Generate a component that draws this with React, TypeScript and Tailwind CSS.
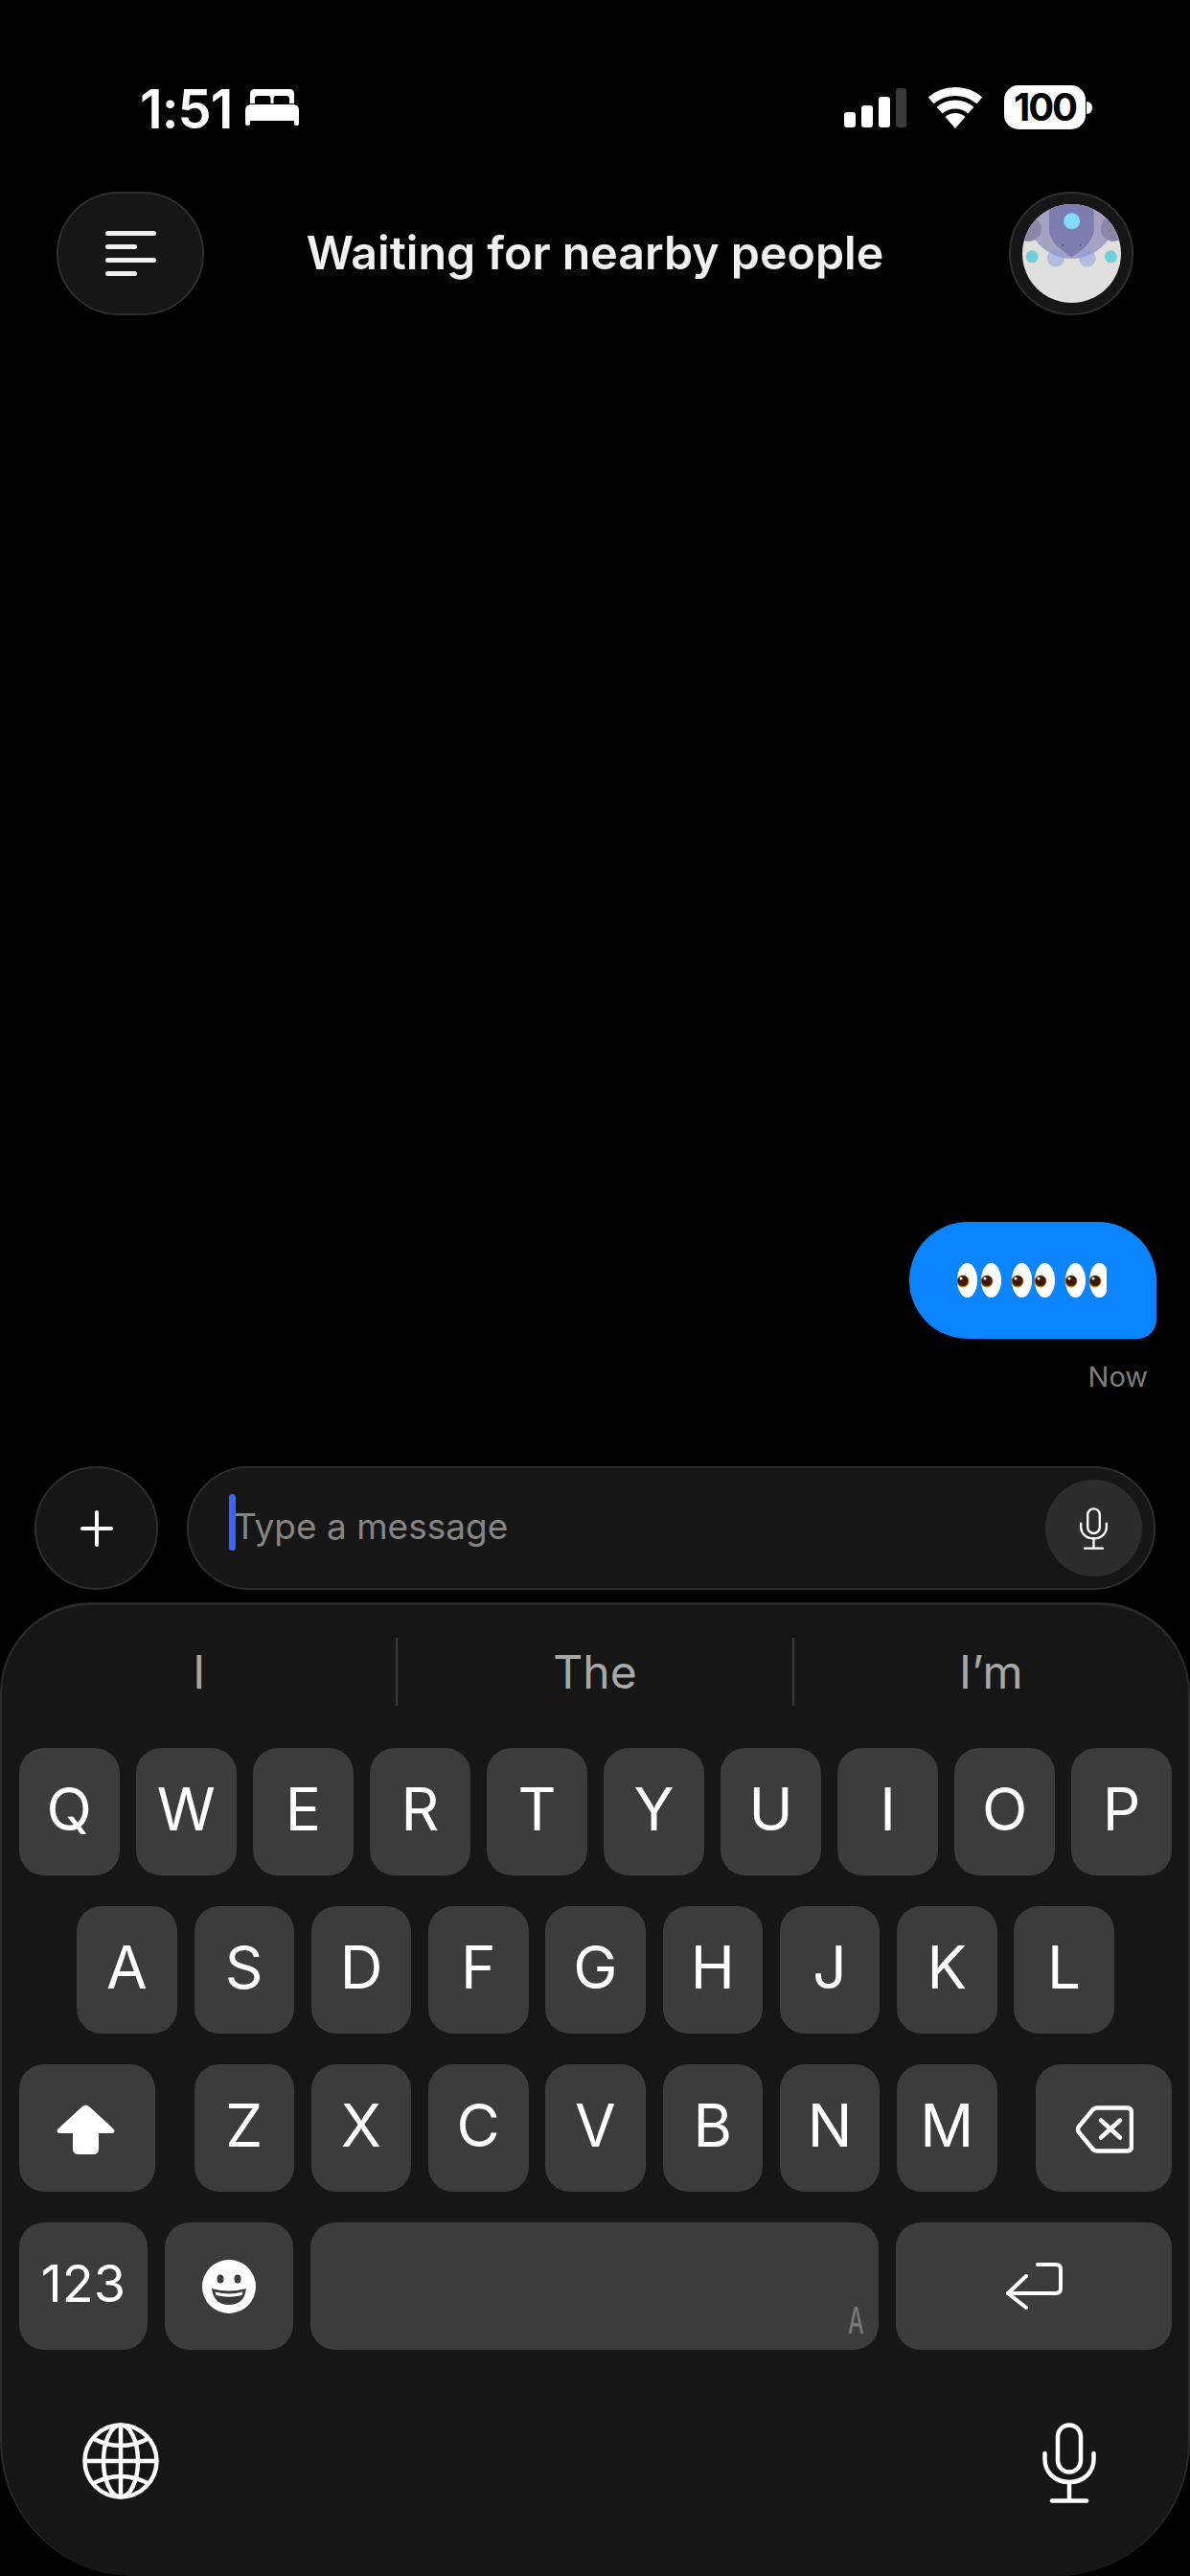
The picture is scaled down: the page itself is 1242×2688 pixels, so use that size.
const rowOne = ['Q', 'W', 'E', 'R', 'T', 'Y', 'U', 'I', 'O', 'P'];
const rowTwo = ['A', 'S', 'D', 'F', 'G', 'H', 'J', 'K', 'L'];
const rowThree = ['Z', 'X', 'C', 'V', 'B', 'N', 'M'];
const eyeCenters = [9, 34, 66, 90, 122, 147];

function Key({ label }: { label: string }) {
  return (
    <div className="w-[104.5px] h-[133px] rounded-[26px] bg-[#3c3c3c] flex items-center justify-center pb-[6px] text-[62px] leading-none text-white">
      {label}
    </div>
  );
}

function BedIcon() {
  return (
    <svg width="56" height="38" viewBox="0 0 56 38" fill="#fff">
      <path
        fillRule="evenodd"
        d="M5 15V5Q5 0 10 0H46Q51 0 51 5V15H46V10Q46 7 43 7H32Q29.500 7 29.500 10V15H26.500V10Q26.500 7 24 7H13Q10 7 10 10V15Z"
      />
      <path d="M0 22Q0 16 6 16H50Q56 16 56 22V36Q56 38 54 38H53Q51 38 51 36V33H5V36Q5 38 3 38H2Q0 38 0 36Z" />
    </svg>
  );
}

function SignalIcon() {
  return (
    <div className="flex items-end gap-[6px] h-[41px]">
      <div className="w-[12px] h-[16px] rounded-[3px] bg-white" />
      <div className="w-[12px] h-[23px] rounded-[3px] bg-white" />
      <div className="w-[12px] h-[32px] rounded-[3px] bg-white" />
      <div className="w-[11px] h-[41px] rounded-[3px] bg-[#3a3a3a]" />
    </div>
  );
}

function WifiIcon() {
  return (
    <svg width="56" height="43" viewBox="0 0 56 43" fill="none" stroke="#fff" strokeWidth="9">
      <path d="M2.740 13.940A38.500 38.500 0 0 1 53.260 13.940" />
      <path d="M11.600 24.130A25 25 0 0 1 44.400 24.130" />
      <path d="M17.500 30.920A16 16 0 0 1 38.500 30.920L28 43Z" fill="#fff" stroke="none" />
    </svg>
  );
}

function Battery() {
  return (
    <div className="flex items-center gap-[1px]">
      <div className="w-[85px] h-[46px] rounded-[15px] bg-white flex items-center justify-center text-[40px] font-bold leading-none text-black tracking-[-2px]">
        100
      </div>
      <div className="w-[6px] h-[13px] rounded-r-[6px] bg-white" />
    </div>
  );
}

function Avatar() {
  return (
    <div className="w-[130px] h-[129px] rounded-full bg-[#161616] border-[2px] border-[#2e2e2e] flex items-center justify-center">
      <svg width="103" height="103" viewBox="0 0 103.300 103.300">
        <defs>
          <clipPath id="avatar-clip">
            <circle cx="51.650" cy="51.650" r="51.650" />
          </clipPath>
        </defs>
        <g clipPath="url(#avatar-clip)">
          <rect width="104" height="104" fill="#e0e0de" />
          <ellipse cx="51.700" cy="2" rx="50" ry="55" fill="#a3a3c3" />
          <path d="M28 0V25C28 42 45 50 51.700 56C58 50 75 42 75 25V0Z" fill="#7d7db0" />
          <circle cx="7" cy="26" r="13" fill="#8d86a8" />
          <circle cx="95" cy="26" r="13" fill="#8d86a8" />
          <circle cx="35" cy="56.700" r="9" fill="#8f9ce0" opacity="0.55" />
          <circle cx="68" cy="56.700" r="9" fill="#8f9ce0" opacity="0.55" />
          <circle cx="51.700" cy="17.700" r="8.500" fill="#7fdcff" />
          <circle cx="10.300" cy="55" r="6.500" fill="#6fd0d8" />
          <circle cx="92.700" cy="55" r="6.500" fill="#6fd0d8" />
          <circle cx="42" cy="43" r="0.700" fill="#333" />
          <circle cx="61" cy="43" r="0.700" fill="#333" />
          <circle cx="12" cy="27" r="0.600" fill="#a33" />
          <circle cx="91" cy="27" r="0.600" fill="#a33" />
        </g>
      </svg>
    </div>
  );
}

function EyesEmoji() {
  return (
    <svg width="156" height="36" viewBox="0 0 156 36">
      {eyeCenters.map((cx) => (
        <g key={cx}>
          <ellipse cx={cx + 1.500} cy="18" rx="10.500" ry="18" fill="#fff" />
          <circle cx={cx - 3} cy="19" r="6.500" fill="#b98508" />
          <circle cx={cx - 3} cy="18.500" r="5.500" fill="#3a1a05" />
          <circle cx={cx - 5} cy="16" r="1.500" fill="#fff" />
        </g>
      ))}
    </svg>
  );
}

function SmallMic({ width, height, stroke }: { width: number; height: number; stroke: number }) {
  return (
    <svg width={width} height={height} viewBox="0 0 56 84" fill="none" stroke="#fff" strokeWidth={stroke} strokeLinecap="round">
      <rect x="16" y="2.500" width="24" height="49" rx="12" />
      <path d="M2.500 32V38C2.500 52 13 62 28 62C43 62 53.500 52 53.500 38V32" />
      <path d="M28 62V81.500M10 81.500H46" />
    </svg>
  );
}

function ShiftIcon() {
  return (
    <svg width="61" height="52" viewBox="0 0 61 52" fill="#fff">
      <path d="M27 2Q30.500 -1 34 2L59 25Q62.500 29 58 30H44V46Q44 52 38 52H23Q17 52 17 46V30H3Q-1.500 29 2 25Z" />
    </svg>
  );
}

function DeleteIcon() {
  return (
    <svg width="60" height="50" viewBox="0 0 60 50" fill="none" stroke="#fff" strokeWidth="4.500" strokeLinecap="round" strokeLinejoin="round">
      <path d="M22 2.500H53Q58 2.500 58 7.500V42.500Q58 47.500 53 47.500H22Q20 47.500 18 46L3 28Q1 25 3 22L18 4Q20 2.500 22 2.500Z" />
      <path d="M26 15.500L46 33.500M46 15.500L26 33.500" />
    </svg>
  );
}

function ReturnIcon() {
  return (
    <svg width="59" height="49" viewBox="0 0 59 49" fill="none" stroke="#fff" strokeWidth="4" strokeLinecap="round" strokeLinejoin="round">
      <path d="M33 2H52Q57 2 57 7V27Q57 32 52 32H2" />
      <path d="M21 14L2 32L21 47" />
    </svg>
  );
}

function EmojiIcon() {
  return (
    <svg width="56" height="56" viewBox="0 0 56 56">
      <circle cx="28" cy="28" r="28" fill="#fff" />
      <ellipse cx="19" cy="20" rx="3.500" ry="4.500" fill="#3c3c3c" />
      <ellipse cx="37" cy="20" rx="3.500" ry="4.500" fill="#3c3c3c" />
      <path d="M10 30Q28 35 46 30Q44 47 28 47Q12 47 10 30Z" fill="#3c3c3c" />
      <path d="M13.500 33.500Q28 37.500 42.500 33.500L41.500 37Q28 40.500 14.500 37Z" fill="#fff" />
    </svg>
  );
}

function GlobeIcon() {
  return (
    <svg width="80" height="80" viewBox="0 0 80 80" fill="none" stroke="#fff" strokeWidth="4.500">
      <circle cx="40" cy="40" r="37.500" />
      <ellipse cx="40" cy="40" rx="18" ry="37.500" />
      <path d="M40 2.500V77.500M2.500 40H77.500" />
      <path d="M10 16Q40 32 70 16M10 64Q40 48 70 64" />
    </svg>
  );
}

export default function App() {
  return (
    <div className="relative w-[1242px] h-[2688px] bg-black flex flex-col font-['Inter',sans-serif] overflow-hidden">
      {/* Status bar */}
      <div className="h-[200px] pt-[89px] pl-[146px] pr-[102px] flex items-start justify-between">
        <div className="flex items-center gap-[14px] h-[46px]">
          <span className="pt-[3px] text-[56px] leading-none font-semibold text-white tracking-[-1px]">1:51</span>
          <BedIcon />
        </div>
        <div className="flex items-center h-[46px]">
          <SignalIcon />
          <div className="mx-[23px]">
            <WifiIcon />
          </div>
          <Battery />
        </div>
      </div>

      {/* Header */}
      <div className="h-[129px] pl-[59px] pr-[59px] flex items-center">
        <div className="w-[154px] h-[129px] shrink-0 rounded-full bg-[#161616] border-[2px] border-[#2e2e2e] flex flex-col justify-center gap-[9px] pl-[49px]">
          <div className="w-[53px] h-[5px] rounded-full bg-[#f0f0f0]" />
          <div className="w-[33px] h-[5px] rounded-full bg-[#f0f0f0]" />
          <div className="w-[53px] h-[5px] rounded-full bg-[#f0f0f0]" />
          <div className="w-[33px] h-[5px] rounded-full bg-[#f0f0f0]" />
        </div>
        <div className="flex-1 text-center text-[48.3px] font-semibold leading-none text-[#f0f0f2]">Waiting for nearby people</div>
        <div className="w-[154px] shrink-0 flex justify-end">
          <Avatar />
        </div>
      </div>

      {/* Chat */}
      <div className="flex-1 flex flex-col items-end justify-end pb-[78px]">
        <div className="w-[258px] h-[122px] mr-[35px] bg-[#0a84ff] rounded-tl-[61px] rounded-tr-[61px] rounded-bl-[61px] rounded-br-[20px] flex items-center justify-center pr-[2px]">
          <EyesEmoji />
        </div>
        <div className="mt-[25px] mr-[44px] text-[29px] leading-[30px] text-[#7d7d7d]">Now</div>
      </div>

      {/* Input row */}
      <div className="h-[129px] mb-[13px] pl-[36px] pr-[36px] flex items-center gap-[30px]">
        <div className="w-[129px] h-[129px] shrink-0 rounded-full bg-[#161616] border-[2px] border-[#2e2e2e] flex items-center justify-center">
          <svg width="34" height="38" viewBox="0 0 34 38" stroke="#fff" strokeWidth="4" strokeLinecap="round">
            <path d="M17 2V36M2 19H32" />
          </svg>
        </div>
        <div className="flex-1 h-[129px] rounded-full bg-[#161616] border-[2px] border-[#2e2e2e] flex items-center pl-[42px] pr-[12px]">
          <div className="w-[7px] h-[59px] mb-[12px] rounded-full bg-[#3b66f5]" />
          <span className="flex-1 -ml-[2px] pb-[4px] text-[37px] leading-none text-[#858585]">Type a message</span>
          <div className="w-[101px] h-[101px] rounded-full bg-[#2c2c2c] flex items-center justify-center">
            <SmallMic width={31} height={44} stroke={4.500} />
          </div>
        </div>
      </div>

      {/* Keyboard */}
      <div className="relative h-[1016px] rounded-t-[95px] rounded-b-[140px] bg-[#161616] border-t-[3px] border-x-[2px] border-[#2a2a2a] flex flex-col">
        <div className="h-[149px] pt-[34px] flex items-start">
          <div className="flex-1 h-[71px] flex items-center justify-center text-[48px] leading-none text-[#a8a8a8]">I</div>
          <div className="w-[2px] h-[71px] bg-[#3a3a3a]" />
          <div className="flex-1 h-[71px] flex items-center justify-center text-[48px] leading-none text-[#a8a8a8]">The</div>
          <div className="w-[2px] h-[71px] bg-[#3a3a3a]" />
          <div className="flex-1 h-[71px] flex items-center justify-center text-[48px] leading-none text-[#a8a8a8]">I’m</div>
        </div>

        <div className="flex flex-col gap-[32px] pl-[18px] pr-[17px]">
          <div className="flex justify-between">
            {rowOne.map((k) => (
              <Key key={k} label={k} />
            ))}
          </div>
          <div className="flex justify-center gap-[17.75px]">
            {rowTwo.map((k) => (
              <Key key={k} label={k} />
            ))}
          </div>
          <div className="flex justify-between">
            <div className="w-[142px] h-[133px] rounded-[26px] bg-[#3c3c3c] flex items-center justify-center pr-[4px] pt-[3px]">
              <ShiftIcon />
            </div>
            <div className="flex gap-[17.75px]">
              {rowThree.map((k) => (
                <Key key={k} label={k} />
              ))}
            </div>
            <div className="w-[142px] h-[133px] rounded-[26px] bg-[#3c3c3c] flex items-center justify-center pl-[2px] pt-[3px]">
              <DeleteIcon />
            </div>
          </div>
          <div className="flex gap-[18px]">
            <div className="w-[134px] h-[133px] rounded-[26px] bg-[#3c3c3c] flex items-center justify-center pb-[6px] text-[54px] leading-none text-white">
              123
            </div>
            <div className="w-[134px] h-[133px] rounded-[26px] bg-[#3c3c3c] flex items-center justify-center">
              <EmojiIcon />
            </div>
            <div className="relative flex-1 h-[133px] rounded-[26px] bg-[#3c3c3c]">
              <span className="absolute right-[10px] bottom-[12px] text-[38px] font-medium leading-none text-[#777] scale-x-[0.62]">A</span>
            </div>
            <div className="w-[288px] h-[133px] rounded-[26px] bg-[#3c3c3c] flex items-center justify-center">
              <ReturnIcon />
            </div>
          </div>
        </div>

        <div className="flex-1 flex items-start justify-between pt-[76px] pl-[84px] pr-[96px]">
          <GlobeIcon />
          <SmallMic width={56} height={84} stroke={4.500} />
        </div>
      </div>
    </div>
  );
}
